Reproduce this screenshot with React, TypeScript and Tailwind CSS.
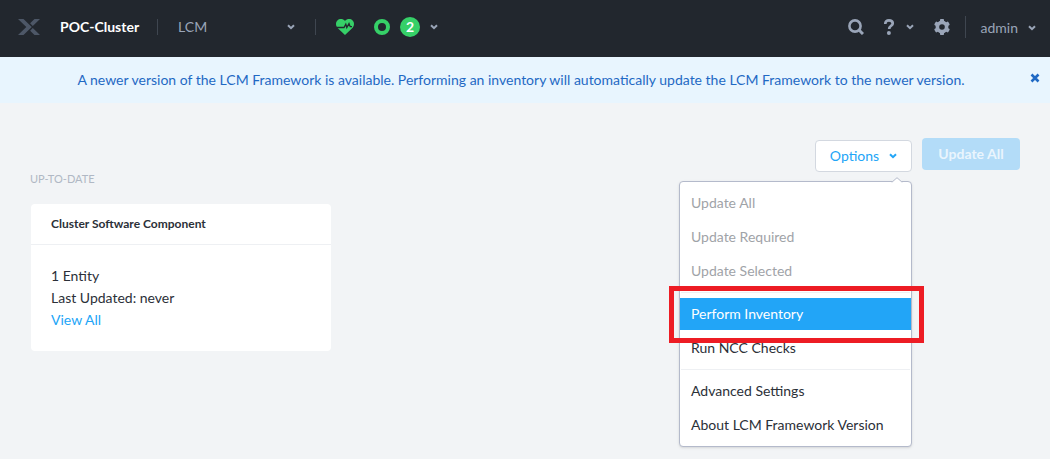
import React from "react";

function Chevron({ className = "" }: { className?: string }) {
  return (
    <svg
      viewBox="0 0 8 6"
      className={`h-1.5 w-2 shrink-0 ${className}`}
      fill="none"
      stroke="currentColor"
      strokeWidth="2"
      aria-hidden="true"
    >
      <path d="M1 1.2 4 4.2 7 1.2" />
    </svg>
  );
}

function Logo() {
  return (
    <svg viewBox="0 0 22 16" className="h-4 w-[22px]" fill="#4d5767" aria-hidden="true">
      <path d="M0 0h5.500l8.300 8-8.300 8H0l8.300-8z" />
      <path d="M16.500 0H22l-7.200 7-2.700-2.700zM16.500 16H22l-7.200-7-2.700 2.700z" />
    </svg>
  );
}

function HeartPulse() {
  return (
    <svg viewBox="0 0 18 16" className="h-4 w-[18px]" aria-hidden="true">
      <path
        d="M9 16 1.600 9C-.6 6.600-.4 3.200 1.400 1.400 3.600-.6 7-.4 9 2c2-2.400 5.400-2.600 7.600-.6 1.800 1.800 2 5.200-.2 7.600z"
        fill="#36d068"
      />
      <path
        d="M0 8.500h8L9.800 5.200l1 3.300 2.200-3.900 1.200 3.100H16"
        fill="none"
        stroke="#22272e"
        strokeWidth="1.300"
      />
    </svg>
  );
}

function SearchIcon() {
  return (
    <svg viewBox="0 0 16 16" className="size-4" fill="none" stroke="currentColor" aria-hidden="true">
      <circle cx="7" cy="7" r="5.600" strokeWidth="2.600" />
      <path d="m11 11 4 4" strokeWidth="3" />
    </svg>
  );
}

function HelpIcon() {
  return (
    <svg viewBox="0 0 10 16" className="h-4 w-2.5" aria-hidden="true">
      <path
        d="M1.300 4.900C1.300 2.500 2.700 1.400 5 1.400s3.700 1.100 3.700 3c0 2.500-3.500 2.300-3.500 5.600"
        fill="none"
        stroke="currentColor"
        strokeWidth="2.700"
      />
      <circle cx="4.900" cy="13.900" r="2" fill="currentColor" />
    </svg>
  );
}

function GearIcon() {
  return (
    <svg viewBox="0 0 16 16" className="size-4" aria-hidden="true">
      <g fill="currentColor">
        <rect x="6" width="4" height="16" rx=".8" />
        <rect x="6" width="4" height="16" rx=".8" transform="rotate(60 8 8)" />
        <rect x="6" width="4" height="16" rx=".8" transform="rotate(120 8 8)" />
      </g>
      <circle cx="8" cy="8" r="4.700" fill="none" stroke="currentColor" strokeWidth="3.400" />
      <circle cx="8" cy="8" r="2.800" fill="#22272e" />
    </svg>
  );
}

function Header() {
  return (
    <header className="flex h-[57px] items-center justify-between bg-[#22272e] pr-3.5 pb-[3px] pl-[18px] text-[#9aa5b8]">
      <div className="flex items-center">
        <Logo />
        <h1 className="ml-5 text-sm font-bold text-white">POC-Cluster</h1>
        <span className="ml-[18px] h-4 w-px bg-[#3f4650]" />
        <div className="relative ml-5 flex w-[117px] items-center">
          <select
            aria-label="Page"
            className="w-full appearance-none bg-transparent text-sm text-[#9aa5b8]"
            defaultValue="LCM"
          >
            <option>LCM</option>
          </select>
          <Chevron className="pointer-events-none absolute right-0" />
        </div>
        <span className="ml-5 h-4 w-px bg-[#3f4650]" />
        <button type="button" aria-label="Health" className="ml-5">
          <HeartPulse />
        </button>
        <button type="button" aria-label="Tasks" className="ml-5 flex items-center">
          <span className="size-4 rounded-full border-4 border-[#36d068]" />
          <span className="mx-2.5 flex size-5 items-center justify-center rounded-full bg-[#36d068] text-sm leading-5 font-bold text-white">
            2
          </span>
          <Chevron />
        </button>
      </div>
      <div className="flex items-center">
        <button type="button" aria-label="Search">
          <SearchIcon />
        </button>
        <button type="button" aria-label="Help" className="ml-5 flex items-center gap-3">
          <HelpIcon />
          <Chevron />
        </button>
        <button type="button" aria-label="Settings" className="ml-5">
          <GearIcon />
        </button>
        <span className="ml-[15px] h-[22px] w-px bg-[#3f4650]" />
        <button type="button" className="ml-[15px] flex items-center gap-2.5 pt-0.5 text-sm">
          admin
          <Chevron />
        </button>
      </div>
    </header>
  );
}

function Banner() {
  return (
    <div role="status" className="flex h-[46px] items-center bg-[#e8f5fe] pr-2.5 pl-3 text-[#1f69c4]">
      <p className="flex-1 text-center text-sm whitespace-nowrap">
        A newer version of the LCM Framework is available. Performing an inventory will automatically update the LCM
        Framework to the newer version.
      </p>
      <button type="button" aria-label="Dismiss" className="pb-1">
        <svg viewBox="0 0 10 10" className="size-2.5" stroke="currentColor" strokeWidth="2.600" aria-hidden="true">
          <path d="m1.500 1.500 7 7m0-7-7 7" />
        </svg>
      </button>
    </div>
  );
}

const itemBase = "flex h-8 w-full items-center px-[11px] text-sm";

function MenuItem({ label, disabled = false }: { label: string; disabled?: boolean }) {
  return (
    <li role="none">
      <button
        type="button"
        role="menuitem"
        disabled={disabled}
        className={`${itemBase} ${disabled ? "text-[#9fa3a8]" : "text-[#2b3038]"}`}
      >
        {label}
      </button>
    </li>
  );
}

function Separator() {
  return <li role="separator" className="mx-px my-[3px] h-px bg-[#eef0f3]" />;
}

function OptionsMenu() {
  return (
    <div className="absolute top-full right-0 mt-[9px] w-[233px] rounded border border-[#b4bacb] bg-white py-[5px] shadow-sm">
      <svg viewBox="0 0 12 6" className="absolute -top-[5px] right-2 h-1.5 w-3" aria-hidden="true">
        <path d="M0 6 6 .700 12 6" fill="#fff" />
        <path d="M0 4.700h1.500L6 .700l4.500 4H12" fill="none" stroke="#b4bacb" />
      </svg>
      <ul role="menu" className="flex flex-col gap-0.5">
        <MenuItem label="Update All" disabled />
        <MenuItem label="Update Required" disabled />
        <MenuItem label="Update Selected" disabled />
        <Separator />
        <li role="none" className="relative">
          <button type="button" role="menuitem" className={`${itemBase} bg-[#22a5f7] text-white`}>
            Perform Inventory
          </button>
          <span className="pointer-events-none absolute -top-3 -right-[13px] -bottom-[13px] -left-[11px] z-10 border-[5px] border-[#ed1c24]" />
        </li>
        <MenuItem label="Run NCC Checks" />
        <Separator />
        <MenuItem label="Advanced Settings" />
        <MenuItem label="About LCM Framework Version" />
      </ul>
    </div>
  );
}

export default function App() {
  return (
    <div className="min-h-screen bg-[#f2f4f6] font-['Lato','Liberation_Sans',sans-serif] text-[#2b3038]">
      <Header />
      <Banner />
      <main className="px-[30px] pt-[35px]">
        <div className="flex items-start justify-end gap-2.5">
          <div className="relative mt-0.5">
            <button
              type="button"
              aria-haspopup="menu"
              aria-expanded="true"
              className="flex h-8 w-[97px] items-center justify-center gap-2.5 rounded border border-[#d3d8e0] bg-white text-sm text-[#22a5f7]"
            >
              Options
              <Chevron />
            </button>
            <OptionsMenu />
          </div>
          <button type="button" disabled className="h-8 w-[98px] rounded bg-[#b3dcf8] text-sm font-bold text-[#eaf5fd]">
            Update All
          </button>
        </div>
        <h2 className="text-[11px] leading-[14px] text-[#b0b8c4]">UP-TO-DATE</h2>
        <section className="mt-[18px] ml-px w-[300px] rounded-sm bg-white">
          <h3 className="flex h-[41px] items-center border-b border-[#eef0f3] px-5 text-xs font-bold">
            Cluster Software Component
          </h3>
          <div className="p-5 text-sm leading-[22px]">
            <p>1 Entity</p>
            <p>Last Updated: never</p>
            <a href="#entities" className="block text-[#22a5f7]">
              View All
            </a>
          </div>
        </section>
      </main>
    </div>
  );
}
